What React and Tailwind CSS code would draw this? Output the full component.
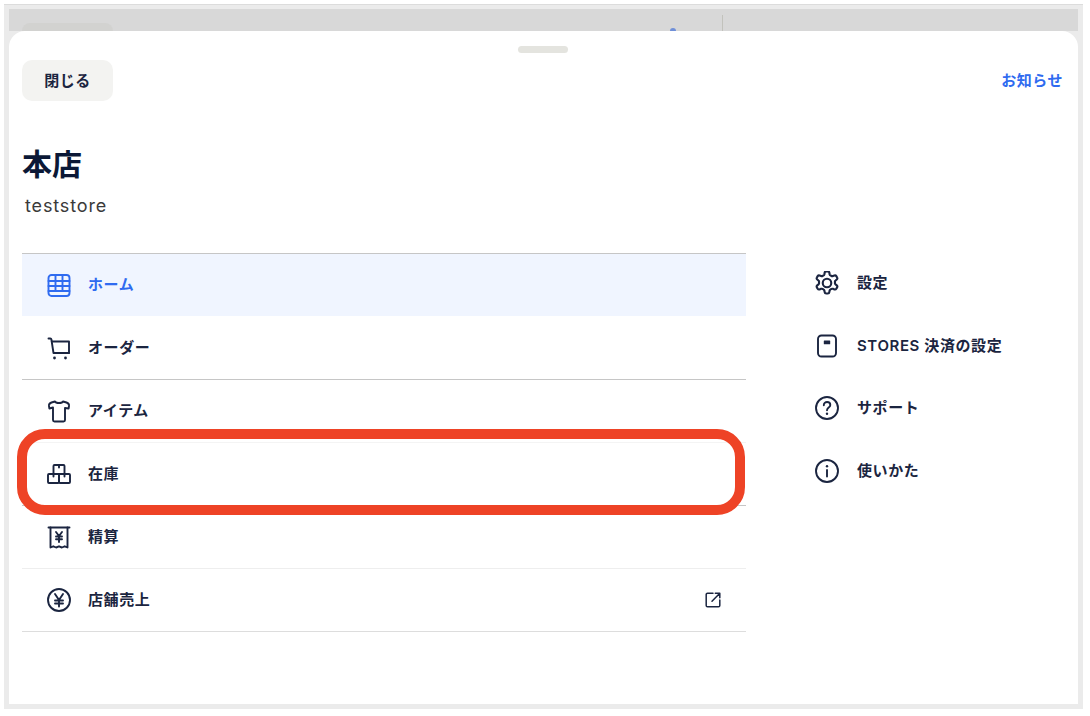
import React from "react";

const S = ({ children, className = "w-6 h-6", box = "0 0 24 24" }) => (
  <svg viewBox={box} fill="none" stroke="currentColor" strokeWidth="1.9" strokeLinecap="round" strokeLinejoin="round" className={className + " shrink-0"}>
    {children}
  </svg>
);

const Grid = () => (
  <S>
    <rect x="1.500" y="2" width="21" height="21" rx="3" />
    <path d="M1.500 8h21M1.500 13h21M1.500 18h21M8.500 2v16M15.500 2v16" />
  </S>
);
const Cart = () => (
  <S>
    <path d="M1.500 2.500h1.800c.6 0 1 .4 1.100 1L6.500 17h15.500" />
    <path d="M4.800 5.500H22V17" />
    <circle cx="7.500" cy="22" r="1.400" fill="currentColor" stroke="none" />
    <circle cx="18.500" cy="22" r="1.400" fill="currentColor" stroke="none" />
  </S>
);
const Shirt = () => (
  <S>
    <path d="M8 2.500C9 4.500 15 4.500 16 2.500l3.500 1c1.700.6 2.700 2 2.500 3.500l-.4 2.500-3.600-.5V21a1.500 1.500 0 0 1-1.500 1.500H7.500A1.500 1.500 0 0 1 6 21V8.500L2.400 9.500 2 7c-.2-1.500.8-2.900 2.500-3.500z" />
  </S>
);
const Boxes = () => (
  <S>
    <rect x="6.500" y="3" width="11" height="9" rx="1" />
    <rect x="1" y="12" width="11" height="9" rx="1" />
    <rect x="12" y="12" width="11" height="9" rx="1" />
    <path d="M12 3v2.500M6.500 12v2.500M17.500 12v2.500" />
  </S>
);
const Receipt = () => (
  <S>
    <path d="M1.500 2.500h21" />
    <path d="M3.500 2.500V22.500l2.800-1.200 2.800 1.200 2.900-1.200 2.900 1.200 2.800-1.200 2.800 1.200V2.500" />
    <path d="M9 7l3 4 3-4M12 11v6M9 11.500h6M9 14.300h6" />
  </S>
);
const YenCircle = () => (
  <S>
    <circle cx="12" cy="12" r="11" />
    <path d="M8 6l4 6 4-6M12 12v6.500M8 12.500h8M8 15.500h8" />
  </S>
);
const Gear = () => (
  <S box="1.300 1.300 21.400 21.400">
    <path d="M9.900 2.800c.1-.7.700-1.200 1.400-1.200h1.400c.7 0 1.300.5 1.400 1.200l.2 1.400c.1.500.4.900.9 1.100l.7.4c.4.200.9.300 1.400.100l1.300-.5c.7-.2 1.400.1 1.700.6l.7 1.200c.4.600.2 1.300-.3 1.800l-1.100.9c-.4.300-.6.800-.5 1.300v.8c-.1.500.1 1 .5 1.300l1.100.9c.5.500.7 1.200.3 1.800l-.7 1.200c-.3.500-1 .8-1.700.6l-1.300-.5c-.5-.2-1-.1-1.400.1l-.7.4c-.5.200-.8.600-.9 1.100l-.2 1.400c-.1.700-.7 1.200-1.400 1.200h-1.400c-.7 0-1.300-.5-1.400-1.200l-.2-1.400c-.1-.5-.4-.9-.9-1.100l-.7-.4c-.4-.2-.9-.3-1.400-.1l-1.300.5c-.7.200-1.400-.1-1.700-.6l-.7-1.200c-.4-.6-.2-1.300.3-1.800l1.100-.9c.4-.3.6-.8.500-1.300v-.8c.1-.5-.1-1-.5-1.300l-1.100-.9c-.5-.5-.7-1.200-.3-1.800l.7-1.200c.3-.5 1-.8 1.700-.6l1.300.5c.5.200 1 .1 1.400-.1l.7-.4c.5-.2.800-.6.900-1.100z" />
    <circle cx="12" cy="12" r="3.800" />
  </S>
);
const Terminal = () => (
  <S>
    <rect x="3" y="1.500" width="18" height="21" rx="3.500" />
    <rect x="8.800" y="6.500" width="6.400" height="3.800" rx=".5" fill="currentColor" stroke="none" />
  </S>
);
const Help = () => (
  <S>
    <circle cx="12" cy="12" r="11" />
    <path d="M8.800 9.200c0-1.900 1.400-3.200 3.300-3.200s3.200 1.200 3.200 2.900c0 2.700-3.300 2.700-3.300 5.400" />
    <circle cx="12" cy="17.700" r="1.200" fill="currentColor" stroke="none" />
  </S>
);
const Info = () => (
  <S>
    <circle cx="12" cy="12" r="11" />
    <path d="M12 11v6.500" />
    <circle cx="12" cy="7.200" r="1.200" fill="currentColor" stroke="none" />
  </S>
);
const External = () => (
  <svg viewBox="0 0 16 16" fill="none" stroke="currentColor" strokeWidth="1.500" strokeLinecap="round" strokeLinejoin="round" className="w-4 h-4 shrink-0">
    <path d="M8 1.200H2.500A1.300 1.300 0 0 0 1.200 2.500v11a1.300 1.300 0 0 0 1.300 1.300h11a1.300 1.300 0 0 0 1.300-1.300V8" />
    <path d="M7 9.300 14.800 1.200M10.300 1.200h4.500v4.500" />
  </svg>
);

const rows = [
  { label: "ホーム", Icon: Grid, cls: "bg-[#f0f5ff] text-[#2f6bf0] h-[62px]" },
  { label: "オーダー", Icon: Cart, cls: "text-[#1b2540] h-[64px] pt-[1px] border-b border-[#c6c6c6]" },
  { label: "アイテム", Icon: Shirt, cls: "text-[#1b2540] h-[63px] border-b border-[#f4f4f4]" },
  { label: "在庫", Icon: Boxes, cls: "text-[#1b2540] h-[63px] border-b border-[#c6c6c6]" },
  { label: "精算", Icon: Receipt, cls: "text-[#1b2540] h-[63px] border-b border-[#eeeeee]" },
  { label: "店舗売上", Icon: YenCircle, cls: "text-[#1b2540] h-[63px] border-b border-[#dddddd]", ext: true },
];

const side = [
  { label: "設定", Icon: Gear },
  { label: "STORES 決済の設定", Icon: Terminal },
  { label: "サポート", Icon: Help },
  { label: "使いかた", Icon: Info },
];

export default function App() {
  return (
    <div className="w-[1090px] h-[716px] bg-white overflow-hidden pt-[4px] pl-[4px] font-['Inter','Noto_Sans_CJK_JP',sans-serif]">
      <div className="w-[1079px] h-[705px] bg-[#ebebeb] border-t border-[#dcdcdc] px-[5px] pt-[4px] pb-[5px] flex flex-col">
        <div className="h-[22px] shrink-0 bg-[#d8d8d8] flex items-start pl-[13px] pt-[14px] overflow-hidden">
          <div className="w-[91px] h-[8px] bg-[#d2d2d0] rounded-t-[8px]" />
          <div className="ml-[557px] mt-[5px] w-[6px] h-[3px] bg-[#6f8fd8] rounded-t-full" />
          <div className="ml-[46px] -mt-[8px] w-[1px] h-[16px] bg-[#c2c2bc]" />
        </div>
        <div className="flex-1 bg-white rounded-t-[16px] px-[13px] text-[#1b2540] flex flex-col">
          <div className="ml-[496px] mt-[15px] w-[50px] h-[7px] rounded-full bg-[#e4e4df]" />
          <div className="mt-[7px] flex items-center justify-between pr-[2px]">
            <button className="w-[91px] h-[41px] pt-[1px] rounded-[10px] bg-[#f3f3f1] text-[15px] font-semibold tracking-[0.5px] text-[#1b2540]">閉じる</button>
            <span className="pt-[1px] text-[15px] font-semibold tracking-[0.5px] text-[#2f6bf0]">お知らせ</span>
          </div>
          <h1 className="mt-[43px] h-[40px] leading-[40px] text-[30px] font-bold text-[#0b1836]">本店</h1>
          <p className="mt-[10px] h-[24px] leading-[24px] pl-[3px] text-[18px] tracking-[0.85px] text-[#3a3a3a]">teststore</p>
          <div className="mt-[35px] flex items-start">
            <div className="relative w-[724px] shrink-0 border-t border-[#c6c6c6]">
              {rows.map(({ label, Icon, cls, ext }) => (
                <div key={label} className={"flex items-center pl-[25px] pr-[25px] " + cls}>
                  <Icon />
                  <span className="ml-[17px] text-[15px] font-semibold tracking-[0.6px] flex-1">{label}</span>
                  {ext && <External />}
                </div>
              ))}
              <div className="absolute left-[-5px] top-[175px] w-[728px] h-[86px] rounded-[28px] border-[10px] border-[#ee4326]" />
            </div>
            <div className="ml-[69px] -mt-[1px] flex flex-col text-[#1b2540]">
              {side.map(({ label, Icon }) => (
                <div key={label} className="h-[62.5px] flex items-center">
                  <Icon />
                  <span className="ml-[18px] text-[15px] font-semibold tracking-[0.6px]">{label}</span>
                </div>
              ))}
            </div>
          </div>
        </div>
      </div>
    </div>
  );
}
